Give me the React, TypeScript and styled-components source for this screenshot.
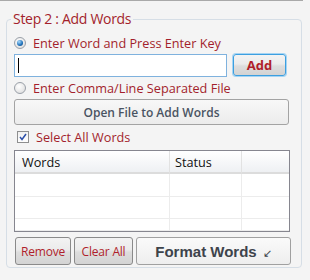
import * as React from "react";
import styled, { createGlobalStyle } from "styled-components";

const GlobalStyle = createGlobalStyle`
  html, body {
    margin: 0;
    padding: 0;
    background: #f4f4f4;
    font-family: "Open Sans", "Noto Sans", sans-serif;
  }
`;

const Panel = styled.div`
  width: 303px;
  height: 280px;
  border-top: 1px solid #a9a9a9;
  box-sizing: border-box;
  padding: 9px 0 0 6px;
`;

const Group = styled.fieldset`
  width: 296px;
  box-sizing: border-box;
  margin: 0;
  padding: 0 0 2px 7px;
  border: 1px solid #d6dee6;
  border-radius: 4px;
  display: flex;
  flex-direction: column;

  & > * {
    flex-shrink: 0;
  }
`;

const Legend = styled.legend`
  padding: 0 2px;
  margin-left: -3px;
  font-size: 14px;
  letter-spacing: -0.3px;
  line-height: 18px;
  color: #a31f2c;
`;

const OptionRow = styled.label<{ $top: number }>`
  display: flex;
  align-items: center;
  gap: 7px;
  height: 18px;
  margin-top: ${(p) => p.$top}px;
  font-size: 12.7px;
  color: #a31f2c;
`;

const Radio = styled.span<{ $checked?: boolean }>`
  width: 10px;
  height: 10px;
  border-radius: 50%;
  border: 1px solid #9aa0a8;
  background: radial-gradient(circle at 40% 35%, #ffffff, #d8d8d8);
  display: flex;
  align-items: center;
  justify-content: center;

  &::after {
    content: "";
    display: ${(p) => (p.$checked ? "block" : "none")};
    width: 6px;
    height: 6px;
    border-radius: 50%;
    background: radial-gradient(circle at 35% 30%, #a9dcff, #1d6fb8 60%, #0b3f73);
  }
`;

const Check = styled.span`
  width: 10px;
  height: 10px;
  margin-left: 3px;
  border: 1px solid #8e8f8f;
  background: linear-gradient(#f0f0f0, #ffffff);
  display: flex;
  align-items: center;
  justify-content: center;
`;

const InputRow = styled.div`
  display: flex;
  gap: 6px;
  margin-top: 2px;
  align-items: flex-start;
`;

const TextBox = styled.div`
  width: 213px;
  height: 23px;
  box-sizing: border-box;
  border: 1px solid #7fb2de;
  background: #fff;
  display: flex;
  align-items: center;
  padding-left: 3px;

  &::before {
    content: "";
    width: 1px;
    height: 15px;
    background: #000;
  }
`;

const Button = styled.button<{ $glow?: boolean; $red?: boolean; $w: number; $h: number; $size?: number }>`
  width: ${(p) => p.$w}px;
  height: ${(p) => p.$h}px;
  box-sizing: border-box;
  padding: 0;
  border-radius: 3px;
  border: 1px solid ${(p) => (p.$glow ? "#3c9fe0" : "#8a8a8a")};
  box-shadow: ${(p) => (p.$glow ? "0 0 0 1px #a5d4f3" : "none")};
  background: ${(p) =>
    p.$red
      ? "linear-gradient(#f3f3f3 0%, #ebebeb 45%, #dddddd 55%, #d3d3d3 100%)"
      : "linear-gradient(#f8f8f8, #ececec)"};
  color: ${(p) => (p.$red ? "#b01e2b" : "#4a5462")};
  font-family: "Open Sans", "Noto Sans", sans-serif;
  font-size: ${(p) => p.$size ?? 12}px;
  letter-spacing: -0.2px;
  cursor: pointer;
`;

const OpenButton = styled(Button)`
  margin-top: 2px;
  border-color: #a3a3a3;
  font-weight: 600;
  letter-spacing: 0;
`;

const AddButton = styled(Button)`
  font-weight: 700;
  font-size: 13px;
  letter-spacing: 0;
`;

const FormatButton = styled(Button)`
  border-color: #a0a0a0;
  background: linear-gradient(#fafafa, #eeeeee);
  font-family: "Liberation Sans", Arial, sans-serif;
  font-weight: 700;
  letter-spacing: 0;
  color: #3d434b;
`;

const Arrow = styled.span`
  font-size: 11px;
  font-weight: 400;
  margin-left: 6px;
`;

const List = styled.div`
  width: 276px;
  height: 82px;
  box-sizing: border-box;
  margin-top: 4px;
  border: 1px solid #86868f;
  background: #fff;
  display: grid;
  grid-template-columns: 155px 72px 1fr;
  grid-template-rows: 23px 23px 22px 1fr;
`;

const HeadCell = styled.div`
  background: linear-gradient(#ffffff, #eef0f3);
  border-right: 1px solid #e2e2e2;
  border-bottom: 2px solid #dcdcdc;
  font-size: 12.7px;
  color: #111;
  display: flex;
  align-items: center;
  padding-left: 7px;
  box-sizing: border-box;

  &:nth-child(2) {
    padding-left: 5px;
  }
  &:nth-child(3) {
    border-right: none;
  }
`;

const Cell = styled.div`
  border-right: 1px solid #ececec;
  border-bottom: 1px solid #ececec;

  &:nth-child(3n) {
    border-right: none;
  }
`;

const ActionRow = styled.div`
  display: flex;
  gap: 3px;
  margin-top: 5px;
  padding-left: 1px;
`;

export default function App() {
  return (
    <>
      <GlobalStyle />
      <Panel>
        <Group>
          <Legend>Step 2 : Add Words</Legend>
          <OptionRow $top={6}>
            <Radio $checked />
            Enter Word and Press Enter Key
          </OptionRow>
          <InputRow>
            <TextBox />
            <AddButton $glow $red $w={53} $h={22}>
              Add
            </AddButton>
          </InputRow>
          <OptionRow $top={2}>
            <Radio />
            Enter Comma/Line Separated File
          </OptionRow>
          <OpenButton $w={275} $h={26}>
            Open File to Add Words
          </OpenButton>
          <OptionRow $top={3}>
            <Check>
              <svg width="8" height="8" viewBox="0 0 8 8">
                <path d="M1 4 L3 6.5 L7 1" fill="none" stroke="#2b4fa8" strokeWidth="1.5" />
              </svg>
            </Check>
            Select All Words
          </OptionRow>
          <List>
            <HeadCell>Words</HeadCell>
            <HeadCell>Status</HeadCell>
            <HeadCell />
            {Array.from({ length: 9 }).map((_, i) => (
              <Cell key={i} />
            ))}
          </List>
          <ActionRow>
            <Button $red $w={56} $h={28}>
              Remove
            </Button>
            <Button $red $w={59} $h={28}>
              Clear All
            </Button>
            <FormatButton $w={155} $h={28} $size={15}>
              Format Words<Arrow>↙</Arrow>
            </FormatButton>
          </ActionRow>
        </Group>
      </Panel>
    </>
  );
}
